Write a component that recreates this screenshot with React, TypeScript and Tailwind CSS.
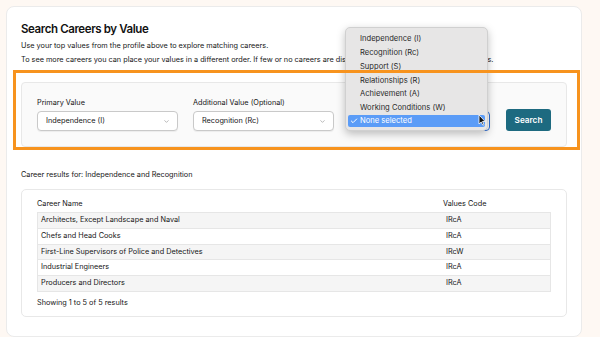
import { Check, ChevronDown } from 'lucide-react';

const careers = [
  { name: 'Architects, Except Landscape and Naval', code: 'IRcA' },
  { name: 'Chefs and Head Cooks', code: 'IRcA' },
  { name: 'First-Line Supervisors of Police and Detectives', code: 'IRcW' },
  { name: 'Industrial Engineers', code: 'IRcA' },
  { name: 'Producers and Directors', code: 'IRcA' },
];

const options = [
  'Independence (I)',
  'Recognition (Rc)',
  'Support (S)',
  'Relationships (R)',
  'Achievement (A)',
  'Working Conditions (W)',
];

const FakeSelect = ({ value, focused }: { value: string; focused?: boolean }) => (
  <div
    className={
      focused
        ? 'flex h-[20px] w-[141px] items-center justify-between rounded-[4px] border-[1.5px] border-[#2f6fd6] bg-white pl-[8px] pr-[7px] text-[7.3px] text-[#161616]'
        : 'flex h-[20px] w-[141px] items-center justify-between rounded-[4px] border border-[#c9c9c9] bg-white pl-[8px] pr-[7px] text-[7.3px] text-[#161616] shadow-[0_1px_1px_rgba(0,0,0,0.06)]'
    }
  >
    <span>{value}</span>
    <ChevronDown className="h-[7px] w-[7px] text-[#888]" strokeWidth={2} />
  </div>
);

const App = () => {
  return (
    <div
      className="min-h-[337px] w-[600px] bg-[#fef8f3] pl-[6px] pt-[6px] pr-[18px]"
      style={{ fontFamily: 'Inter, "Liberation Sans", sans-serif' }}
    >
      <div className="relative h-[331px] rounded-[8px] border border-[#ebebeb] bg-white pl-[14px] pr-[14px] pt-[14px]">
        <h1 className="text-[11.5px] font-semibold leading-[16px] tracking-[-0.4px] text-[#111]">
          Search Careers by Value
        </h1>
        <p className="mt-[3px] text-[7.3px] leading-[11px] text-[#161616]">
          Use your top values from the profile above to explore matching careers.
        </p>
        <p className="mt-[3px] whitespace-nowrap text-[7.3px] leading-[11px] text-[#161616]">
          To see more careers you can place your values in a different order. If few or no careers are displayed, try different combination of values.
        </p>

        {/* Filter panel */}
        <div className="mt-[17px] flex h-[65px] items-end gap-[15px] rounded-[4px] border border-[#e8e8e8] bg-[#fafafa] pl-[15px] pb-[15px]">
          <div className="flex flex-col gap-[3px]">
            <label className="text-[7.3px] leading-[10px] text-[#161616]">Primary Value</label>
            <FakeSelect value="Independence (I)" />
          </div>
          <div className="flex flex-col gap-[3px]">
            <label className="text-[7.3px] leading-[10px] text-[#161616]">Additional Value (Optional)</label>
            <FakeSelect value="Recognition (Rc)" />
          </div>
          <div className="flex flex-col gap-[3px]">
            <label className="text-[7.3px] leading-[10px] text-[#161616]">Additional Value (Optional)</label>
            <FakeSelect value="None selected" focused />
          </div>
          <button className="ml-[1px] h-[22px] w-[45px] rounded-[3px] bg-[#1d6a80] text-[8.2px] font-semibold text-white">
            Search
          </button>
        </div>

        <p className="mt-[22px] text-[7.3px] leading-[11px] text-[#161616]">
          Career results for: Independence and Recognition
        </p>

        {/* Results card */}
        <div className="mt-[9px] rounded-[5px] border border-[#e8e8e8] bg-white pl-[15px] pr-[15px] pt-[8px] pb-[8px]">
          <div className="flex h-[12px] items-center text-[7.3px] text-[#161616]">
            <div className="w-[406px]">Career Name</div>
            <div>Values Code</div>
          </div>
          <div className="mt-[2px] border-t border-[#e6e6e6]">
            {careers.map((c, i) => (
              <div
                key={c.name}
                className={
                  i % 2 === 0
                    ? 'flex h-[15.8px] items-center border-x border-b border-[#e6e6e6] bg-[#f5f5f5] text-[7.3px] text-[#161616]'
                    : 'flex h-[15.8px] items-center border-x border-b border-[#e6e6e6] bg-white text-[7.3px] text-[#161616]'
                }
              >
                <div className="w-[405px] pl-[3px]">{c.name}</div>
                <div className="pl-[3px]">{c.code}</div>
              </div>
            ))}
          </div>
          <p className="mt-[5px] text-[7.3px] leading-[11px] text-[#161616]">Showing 1 to 5 of 5 results</p>
        </div>

        {/* Open native dropdown menu */}
        <div className="absolute left-[338px] top-[20px] z-10 w-[143px] rounded-[5px] border border-[#d0d0d0] bg-[#e7e6e6] px-[2px] pt-[4px] pb-[3px] shadow-[0_3px_8px_rgba(0,0,0,0.25)]">
          {options.map((o) => (
            <div key={o} className="flex h-[13.8px] items-center pl-[12px] text-[7.6px] text-[#2a2a2a]">
              {o}
            </div>
          ))}
          <div className="flex h-[12px] items-center rounded-[2px] bg-[#5b9cf7] text-[7.6px] text-white">
            <Check className="ml-[2px] mr-[2px] h-[8px] w-[8px]" strokeWidth={3} />
            <span>None selected</span>
          </div>
          {/* mouse pointer */}
          <svg className="absolute left-[132px] top-[86px]" width="8" height="12" viewBox="0 0 8 12">
            <path d="M1 1 L1 10 L3.2 8 L4.8 11.2 L6 10.6 L4.5 7.5 L7.2 7.5 Z" fill="#111" stroke="#fff" strokeWidth="0.8" />
          </svg>
        </div>

        {/* Orange highlight annotation */}
        <div className="pointer-events-none absolute left-[6px] top-[63px] z-20 h-[80px] w-[567px] border-[3px] border-[#f7931e]" />
      </div>
    </div>
  );
};

export default App;
